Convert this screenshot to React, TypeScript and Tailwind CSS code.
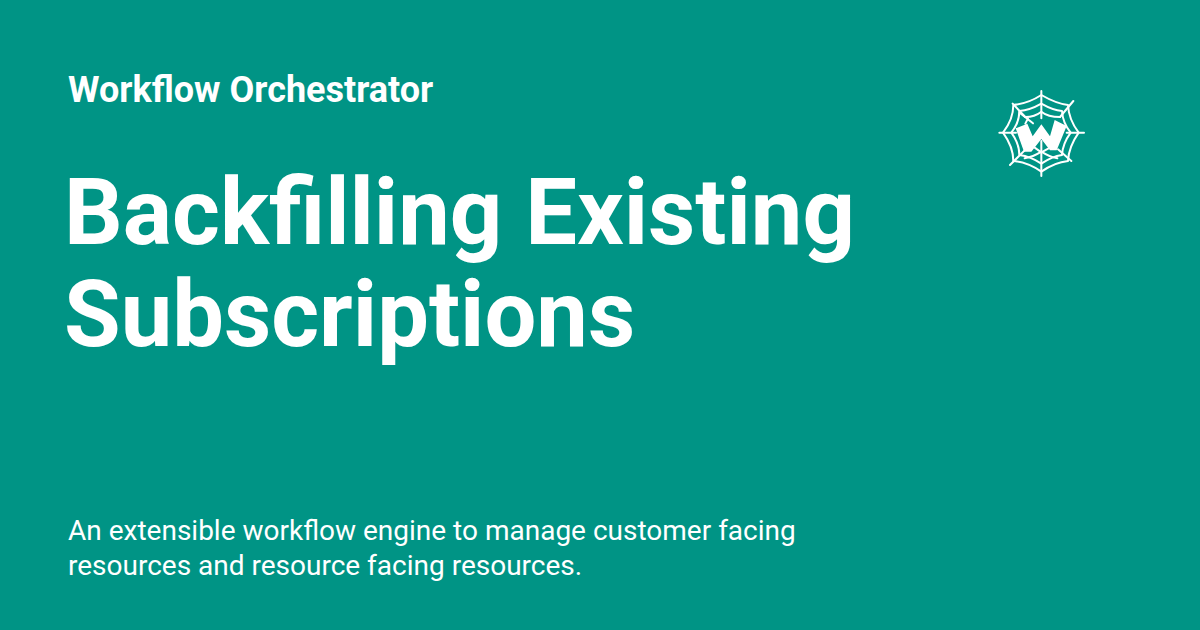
function Logo() {
  return (
    <svg className="mr-[38px] mt-[12px] shrink-0" width="106" height="106" viewBox="0 0 318 318" fill="none" stroke="white" strokeWidth="6" strokeLinecap="round" strokeLinejoin="round">
      <path d="M160 30V285M34 155H288M74 68L246 62M66 252L250 240" stroke="none" />
      <path d="M160 30V112M160 180V285M34 155H84M236 155H288M74 68L112 108M256 60L216 108M66 252L110 208M250 240L210 205" />
      <path d="M160 42Q205 68 240 72Q242 115 272 155Q242 198 240 240Q200 244 160 272Q120 244 76 240Q76 198 45 155Q76 115 76 72Q120 68 160 42Z" />
      <path d="M160 68Q195 88 222 90Q224 125 248 155Q224 188 222 222Q192 226 160 248Q128 226 94 222Q94 188 70 155Q94 125 94 90Q125 88 160 68Z" />
      <path d="M112 108Q140 108 160 92Q180 108 216 108" />
      <path d="M110 232Q135 228 160 212Q185 228 208 232" />
      <path d="M95 95L135 127M120 112L112 128M140 200L160 214L186 200" />
      <path d="M83 142L118 128L134 166L160 130L186 166L200 117L236 135L206 208L186 208L160 174L130 212L108 212Z" fill="white" stroke="none" />
    </svg>
  );
}

export default function App() {
  return (
    <div className="w-[1200px] h-[630px] bg-[#009485] text-white flex flex-col justify-between px-[68px] pt-[69px] pb-[47px] font-['Roboto',sans-serif] overflow-hidden">
      <div className="flex justify-between items-start">
        <div>
          <div className="text-[36px] leading-[42px] font-bold">Workflow Orchestrator</div>
          <h1 className="mt-[51px] text-[92px] leading-[102px] font-bold w-[860px] -ml-[4px]">Backfilling Existing Subscriptions</h1>
        </div>
        <Logo />
      </div>
      <p className="text-[28px] leading-[35px] w-[800px]">An extensible workflow engine to manage customer facing resources and resource facing resources.</p>
    </div>
  );
}
